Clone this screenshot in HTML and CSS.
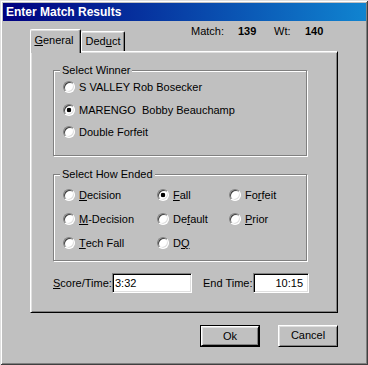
FILE: index.html
```html
<!DOCTYPE html>
<html>
<head>
<meta charset="utf-8">
<link rel="stylesheet" href="styles.css">
</head>
<body>
<div class="window">
  <div class="titlebar">Enter Match Results</div>
  <div class="tabrow">
    <div class="tab tab-active"><span class="u">G</span>eneral</div>
    <div class="tab">Ded<span class="u">u</span>ct</div>
    <div class="info">
      <span class="info-lbl1">Match:</span><b class="info-num1">139</b><span class="info-lbl2">Wt:</span><b>140</b>
    </div>
  </div>
  <div class="panel">
    <div class="group group-winner">
      <div class="legend">Select Winner</div>
      <div class="winner-list">
        <div class="radio"><span class="rb"></span>S VALLEY Rob Bosecker</div>
        <div class="radio"><span class="rb rb-on"></span>MARENGO&nbsp; Bobby Beauchamp</div>
        <div class="radio"><span class="rb"></span>Double Forfeit</div>
      </div>
    </div>
    <div class="group group-ended">
      <div class="legend">Select How Ended</div>
      <div class="ended-grid">
        <div class="radio"><span class="rb"></span><span class="u">D</span>ecision</div>
        <div class="radio"><span class="rb rb-on"></span><span class="u">F</span>all</div>
        <div class="radio"><span class="rb"></span>Fo<span class="u">r</span>feit</div>
        <div class="radio"><span class="rb"></span><span class="u">M</span>-Decision</div>
        <div class="radio"><span class="rb"></span>De<span class="u">f</span>ault</div>
        <div class="radio"><span class="rb"></span><span class="u">P</span>rior</div>
        <div class="radio"><span class="rb"></span><span class="u">T</span>ech Fall</div>
        <div class="radio"><span class="rb"></span>D<span class="u">Q</span></div>
      </div>
    </div>
    <div class="fields">
      <span class="flabel flabel-score"><span class="u">S</span>core/Time:</span>
      <div class="field field-score">3:32</div>
      <span class="flabel flabel-end">End Time:</span>
      <div class="field field-end">10:15</div>
    </div>
  </div>
  <div class="buttons">
    <div class="btn btn-default"><div class="btn-inner">Ok</div></div>
    <div class="btn"><div class="btn-inner">Cancel</div></div>
  </div>
</div>
</body>
</html>
```
FILE: styles.css
```css
html, body {
  margin: 0;
  padding: 0;
  background: #c0c0c0;
}
body {
  font-family: "Liberation Sans", Arial, sans-serif;
  font-size: 11px;
  color: #000;
}
.window {
  width: 368px;
  height: 365px;
  box-sizing: border-box;
  padding: 3px 2px 3px 3px;
  background: #c0c0c0;
  box-shadow: inset 1px 1px 0 #dfdfdf, inset -1px -1px 0 #404040, inset 2px 2px 0 #fff, inset -2px -2px 0 #808080;
}
.titlebar {
  height: 18px;
  line-height: 18px;
  padding-left: 3px;
  color: #fff;
  font-weight: bold;
  font-size: 12px;
  background: linear-gradient(to right, #000080, #1084d0);
}
.u { text-decoration: underline; text-underline-offset: 1px; }

.tabrow {
  display: flex;
  align-items: flex-end;
  height: 30px;
  margin-left: 27px;
  position: relative;
  z-index: 1;
}
.tab {
  box-sizing: border-box;
  height: 20px;
  width: 44px;
  text-align: center;
  line-height: 18px;
  background: #c0c0c0;
  border-top: 1px solid #fff;
  border-left: 1px solid #fff;
  border-right: 1px solid #000;
  border-radius: 2px 2px 0 0;
  box-shadow: inset -1px 0 0 #808080, inset 0 1px 0 #dfdfdf;
}
.tab-active {
  width: 51px;
  height: 24px;
  line-height: 20px;
  margin-bottom: -2px;
  padding-right: 3px;
}
.info {
  align-self: flex-start;
  margin-top: 4px;
  margin-left: 66px;
  line-height: 13px;
  display: flex;
}
.info-lbl1 { width: 47px; }
.info-num1 { width: 36px; }
.info-lbl2 { width: 31px; }

.panel {
  margin-left: 27px;
  width: 308px;
  height: 262px;
  box-sizing: border-box;
  border: 1px solid;
  border-color: #fff #000 #000 #fff;
  box-shadow: inset 1px 1px 0 #dfdfdf, inset -1px -1px 0 #808080;
  padding: 18px 0 0 22px;
}
.group {
  width: 254px;
  box-sizing: border-box;
  border: 1px solid #808080;
  box-shadow: inset 1px 1px 0 #fff, 1px 1px 0 #fff;
}
.group-winner { height: 86px; margin-bottom: 18px; }
.group-ended { height: 87px; }
.legend {
  width: max-content;
  margin: -7px 0 0 6px;
  padding: 0 2px;
  line-height: 13px;
  height: 13px;
  background: #c0c0c0;
}
.winner-list {
  display: flex;
  flex-direction: column;
  gap: 6.5px;
  padding: 2px 0 0 9px;
}
.ended-grid {
  display: grid;
  grid-template-columns: 94px 72px auto;
  row-gap: 8px;
  padding: 6px 0 0 9px;
}
.radio {
  display: flex;
  align-items: center;
  height: 16px;
  white-space: nowrap;
}
.rb {
  width: 12px;
  height: 12px;
  box-sizing: border-box;
  border-radius: 50%;
  margin-right: 4px;
  flex: none;
  background: #fff;
  border: 1px solid;
  border-color: #808080 #fff #fff #808080;
  box-shadow: inset 1px 1px 0 #404040, inset -1px -1px 0 #dfdfdf;
}
.rb-on {
  background: radial-gradient(circle at 50% 50%, #000 0 2px, #fff 2.6px);
}

.fields {
  display: flex;
  align-items: center;
  margin-top: 12px;
  height: 20px;
}
.flabel-score { width: 59px; }
.flabel-end { width: 50px; margin-left: 11px; }
.field {
  height: 20px;
  box-sizing: border-box;
  background: #fff;
  border: 1px solid;
  border-color: #808080 #fff #fff #808080;
  box-shadow: inset 1px 1px 0 #000, inset -1px -1px 0 #dfdfdf;
  line-height: 18px;
}
.field-score { width: 80px; padding-left: 2px; }
.field-end { width: 56px; text-align: right; padding-right: 5px; }

.buttons {
  display: flex;
  justify-content: flex-end;
  gap: 18px;
  margin-top: 12px;
  padding-right: 28px;
}
.btn {
  width: 60px;
  height: 22px;
  box-sizing: border-box;
  display: flex;
}
.btn-inner {
  flex: 1;
  box-sizing: border-box;
  border: 1px solid;
  border-color: #fff #000 #000 #fff;
  box-shadow: inset 1px 1px 0 #dfdfdf, inset -1px -1px 0 #808080;
  text-align: center;
  line-height: 19px;
}
.btn-default { border: 1px solid #000; }
```
